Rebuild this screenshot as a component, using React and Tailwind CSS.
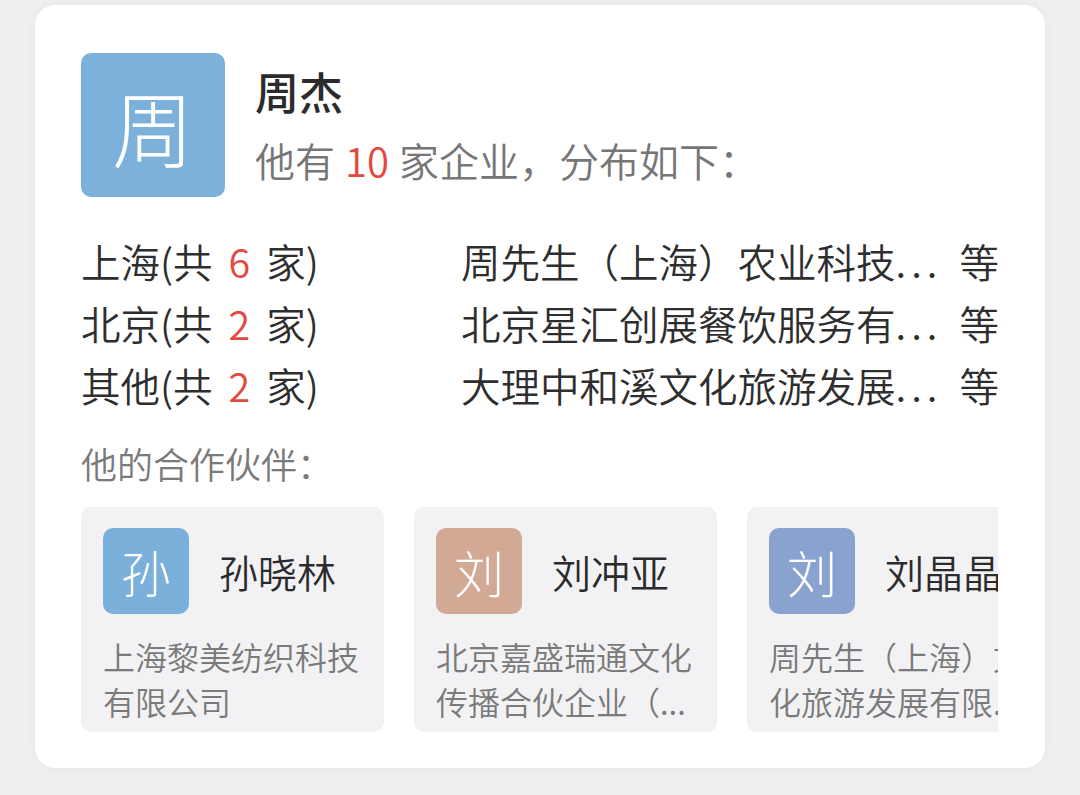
import React from "react";

const regions = [
  { name: "上海", count: 6, firm: "周先生（上海）农业科技" },
  { name: "北京", count: 2, firm: "北京星汇创展餐饮服务有" },
  { name: "其他", count: 2, firm: "大理中和溪文化旅游发展" },
];

const partners = [
  { initial: "孙", name: "孙晓林", firm: "上海黎美纺织科技有限公司", color: "bg-[#7bb0da]" },
  { initial: "刘", name: "刘冲亚", firm: "北京嘉盛瑞通文化传播合伙企业（...", color: "bg-[#d2a995]" },
  { initial: "刘", name: "刘晶晶", firm: "周先生（上海）文化旅游发展有限...", color: "bg-[#89a2cf]" },
];

const PartnerCard = ({ p }) => (
  <div className="shrink-0 w-[303px] h-[225px] rounded-[10px] bg-[#f2f2f4] pl-[22px] pt-[21px]">
    <div className="flex items-center">
      <div
        className={`w-[86px] h-[86px] shrink-0 rounded-[10px] ${p.color} flex items-center justify-center text-white text-[50px] font-light`}
      >
        {p.initial}
      </div>
      <span className="ml-[30px] text-[39px] font-[350] text-[#2b2b2b] whitespace-nowrap">{p.name}</span>
    </div>
    <p className="mt-[20px] text-[32px] leading-[45px] font-[350] text-[#7a7a7a] w-[259px] line-clamp-2">{p.firm}</p>
  </div>
);

const App = () => {
  return (
    <div
      className="w-full h-[795px] bg-[#efeff1] pt-[5px] pl-[35px] overflow-hidden"
      style={{ fontFamily: '"Noto Sans CJK SC", "Noto Sans", sans-serif' }}
    >
      <div className="w-[1010px] h-[763px] rounded-[20px] bg-white shadow-[0_0_12px_rgba(0,0,0,0.04)] pl-[46px] pt-[48px]">
        <div className="flex items-start">
          <div className="w-[144px] h-[144px] rounded-[10px] bg-[#7bb1db] flex items-center justify-center text-white text-[82px] font-light">
            周
          </div>
          <div className="ml-[30px] pt-[8px]">
            <p className="text-[44px] leading-[60px] font-medium text-[#2b2b2b]">周杰</p>
            <p className="mt-[14px] text-[40px] leading-[50px] font-[350] text-[#767676]">
              他有<span className="mx-[10px] text-[#e4483e]">10</span>家企业，分布如下：
            </p>
          </div>
        </div>

        <div className="mt-[33px] w-[918px] font-[350]">
          {regions.map((r) => (
            <div key={r.name} className="flex h-[62px] items-center text-[39.5px] text-[#2e2e2e]">
              <span className="w-[380px] shrink-0 whitespace-nowrap">
                {r.name}(共<span className="mx-[16px] text-[#e4483e]">{r.count}</span>家)
              </span>
              <span className="flex-1 min-w-0 whitespace-nowrap overflow-hidden">
                {r.firm}
                <span className="tracking-[5px]">...</span>
              </span>
              <span className="shrink-0">等</span>
            </div>
          ))}
        </div>

        <p className="mt-[22px] text-[36px] leading-[50px] font-[350] text-[#7a7a7a]">他的合作伙伴：</p>

        <div className="mt-[19px] w-[917px] overflow-hidden flex gap-[30px]">
          {partners.map((p, i) => (
            <PartnerCard key={i} p={p} />
          ))}
        </div>
      </div>
    </div>
  );
};

export default App;
